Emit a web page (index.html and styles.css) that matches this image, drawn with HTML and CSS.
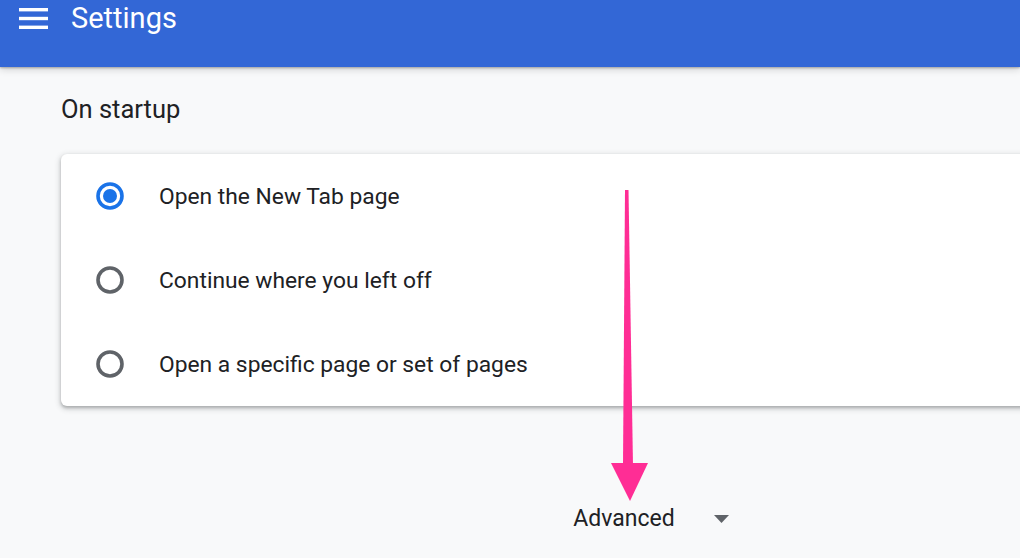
FILE: index.html
```html
<!DOCTYPE html>
<html>
<head>
<meta charset="utf-8">
<link rel="stylesheet" href="styles.css">
</head>
<body>
<header class="toolbar">
  <div class="toolbar-row">
    <svg class="menu-icon" width="29" height="21" viewBox="0 0 29 21">
      <rect x="0" y="0" width="29" height="3.4" fill="#fff"/>
      <rect x="0" y="8.8" width="29" height="3.4" fill="#fff"/>
      <rect x="0" y="17.6" width="29" height="3.4" fill="#fff"/>
    </svg>
    <h1 class="title">Settings</h1>
  </div>
</header>
<main class="content">
  <h2 class="section-title">On startup</h2>
  <div class="card">
    <div class="row">
      <svg class="radio" width="28" height="28" viewBox="0 0 28 28">
        <circle cx="14" cy="14" r="12" fill="none" stroke="#1a73e8" stroke-width="3.6"/>
        <circle cx="14" cy="14" r="7" fill="#1a73e8"/>
      </svg>
      <span class="label">Open the New Tab page</span>
    </div>
    <div class="row">
      <svg class="radio" width="28" height="28" viewBox="0 0 28 28">
        <circle cx="14" cy="14" r="12" fill="none" stroke="#5f6368" stroke-width="3.6"/>
      </svg>
      <span class="label">Continue where you left off</span>
    </div>
    <div class="row">
      <svg class="radio" width="28" height="28" viewBox="0 0 28 28">
        <circle cx="14" cy="14" r="12" fill="none" stroke="#5f6368" stroke-width="3.6"/>
      </svg>
      <span class="label">Open a specific page or set of pages</span>
    </div>
  </div>
  <div class="advanced">
    <span class="advanced-label">Advanced</span>
    <svg class="caret" width="15" height="8" viewBox="0 0 15 8">
      <polygon points="0,0 15,0 7.5,8" fill="#5f6368"/>
    </svg>
  </div>
</main>
<svg class="annotation-arrow" width="60" height="330" viewBox="600 180 60 330">
  <polygon points="625,190 628.5,190 633,466 623,466" fill="#ff2d95"/>
  <polygon points="611,463 648,463 630,501" fill="#ff2d95"/>
</svg>
</body>
</html>
```

FILE: styles.css
```css
html, body {
  margin: 0;
  padding: 0;
  overflow: hidden;
}
body {
  background: #f8f9fa;
  font-family: Roboto, "Liberation Sans", Arial, sans-serif;
  color: #202124;
  width: 1020px;
  height: 558px;
  position: relative;
}
.toolbar {
  height: 67px;
  background: #3367d6;
  box-shadow: 0 1px 2px rgba(0,0,0,0.28), 0 3px 7px rgba(0,0,0,0.14);
  position: relative;
  z-index: 1;
}
.toolbar-row {
  height: 36px;
  display: flex;
  align-items: center;
  padding-left: 19px;
}
.menu-icon {
  display: block;
  flex: none;
}
.title {
  margin: 0 0 0 23px;
  font-size: 29px;
  line-height: 36px;
  font-weight: 400;
  color: #fff;
}
.content {
  padding-left: 61px;
  width: 1180px;
}
.section-title {
  margin: 24px 0 0 0;
  font-size: 25.5px;
  line-height: 36px;
  font-weight: 400;
  color: #202124;
}
.card {
  margin-top: 27px;
  background: #fff;
  border-radius: 6px;
  box-shadow: 0 2px 3px rgba(60,64,67,0.3), 0 2px 5px 2px rgba(60,64,67,0.15);
}
.row {
  height: 84px;
  display: flex;
  align-items: center;
  padding-left: 35px;
}
.radio {
  display: block;
  flex: none;
}
.label {
  margin-left: 35px;
  font-size: 22.8px;
}
.advanced {
  margin-top: 89px;
  height: 48px;
  display: flex;
  align-items: center;
  justify-content: center;
}
.advanced-label {
  font-size: 23px;
  line-height: 48px;
}
.caret {
  display: block;
  margin-left: 39px;
  margin-top: 0;
}
.annotation-arrow {
  position: absolute;
  left: 600px;
  top: 180px;
  z-index: 2;
}
```
